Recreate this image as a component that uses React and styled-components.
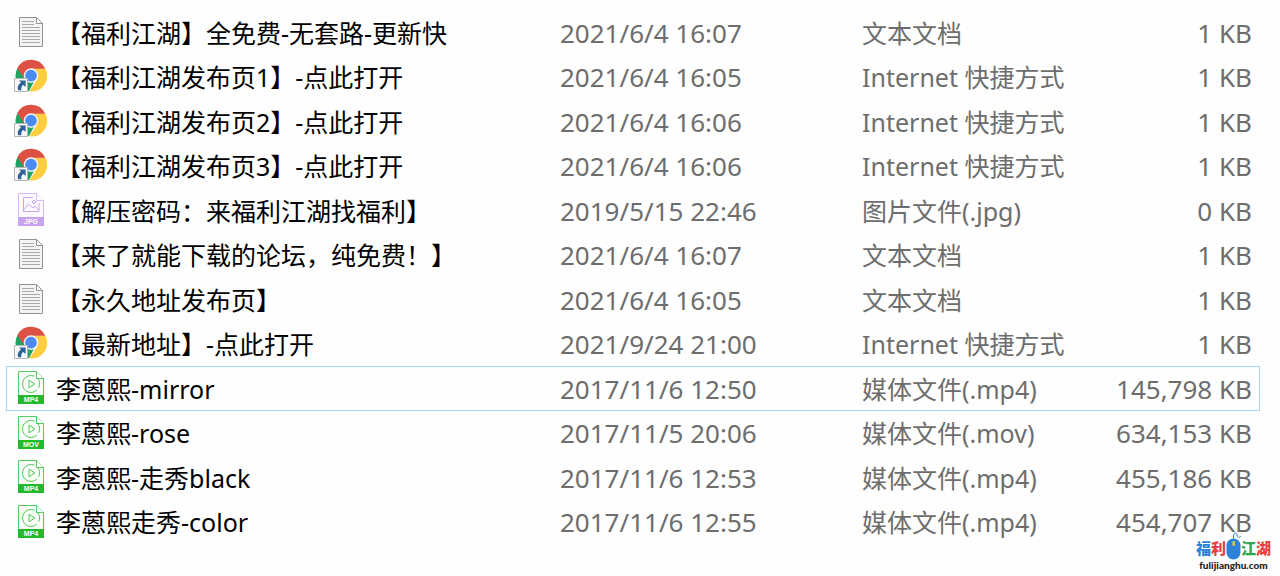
import React from 'react';
import styled, {createGlobalStyle} from 'styled-components';

const GlobalStyle = createGlobalStyle`
  body {
    margin: 0;
    background-color: #fefefe;
    font-family: 'Noto Sans', 'Noto Sans CJK SC', sans-serif;
  }
`

const Page = styled.main`
  position: relative;
  box-sizing: border-box;
  min-height: 100vh;
  padding: 10px 20px 0 6px;
`

const FileTable = styled.table`
  width: 100%;
  table-layout: fixed;
  border-collapse: collapse;
  font-size: 25px;
  line-height: 36px;
  color: #6d6d6d;
`

const Column = styled.col`
  width: ${props => props.$width};
`

const Row = styled.tr`
  height: 45px;
  outline: ${props => props.$selected ? '1px solid #a5d4f5' : 'none'};
  outline-offset: -1px;
  &:nth-child(even) {
    height: 44px;
  }
`

const Cell = styled.td`
  padding: 0;
  white-space: nowrap;
`

const NumberCell = styled(Cell)`
  font-size: 26px;
  padding-right: ${props => props.$right ? '8px' : '0'};
  text-align: ${props => props.$right ? 'right' : 'left'};
`

const NameCell = styled.th`
  padding: 0;
  text-align: left;
  font-weight: 400;
  white-space: nowrap;
  color: #000;
`

const FileName = styled.div`
  display: flex;
  align-items: center;
  gap: 1px;
`

const IconBox = styled.span`
  display: flex;
  justify-content: center;
  width: 49px;
  padding-bottom: 2px;
  svg {
    display: block;
  }
`

const Watermark = styled.a`
  position: absolute;
  right: 9px;
  bottom: 6px;
  display: flex;
  flex-direction: column;
  align-items: center;
  text-decoration: none;
  color: #222;
`

const Brand = styled.span`
  display: flex;
  align-items: flex-end;
  height: 29px;
  font: 900 15px/16px 'Noto Sans CJK SC', sans-serif;
`

const BrandChar = styled.span`
  padding-bottom: 4px;
  color: ${props => props.$color};
`

const Domain = styled.span`
  font: 900 10px/10px 'Lato', sans-serif;
`

const TextIcon = () => (
  <svg width='26' height='32' viewBox='0 0 26 32' aria-hidden='true'>
    <path d='M1.5 1.5h17l6 6v23h-23z' fill='#f4f4f4' stroke='#929292' />
    <path d='M18.5 1.5v6h6z' fill='#fff' stroke='#929292' />
    <path
      d='M4 5.5h12M4 8.5h12M4 11.5h18M4 14.5h18M4 17.5h18M4 20.5h18M4 23.5h18M4 26.5h18'
      stroke='#a9a9a9'
    />
  </svg>
)

const ChromeIcon = () => (
  <svg width='33' height='34' viewBox='0 0 33 34' aria-hidden='true'>
    <path d='M17 17L3.6 9A15.5 15.5 0 0 0 15 32.2L22 19z' fill='#1da462' />
    <path d='M17 17V9.5h14.2A15.5 15.5 0 0 1 15.5 32.3L23.5 20z' fill='#ffcd40' />
    <path d='M3.3 9.2A15.5 15.5 0 0 1 31.2 9.8H17L10.5 20z' fill='#dd5144' />
    <circle cx='17' cy='16.6' r='7.3' fill='#f1f1f1' />
    <circle cx='17' cy='16.6' r='5.8' fill='#4b8bf5' />
    <path d='M.5 19.5h13v13H.5z' fill='#f8f8f8' stroke='#b5b5b5' />
    <path d='M5 21.4h6.6V28l-2.2-2c-1.8 1-2.4 2.6-2 5.3H4.2c-1.2-3.4 0-6 2.8-7.9z' fill='#2e6299' />
  </svg>
)

const LabelIcon = ({color, paper, label, children}) => (
  <svg width='28' height='35' viewBox='0 0 28 35' aria-hidden='true'>
    <path d='M1.5 1.5h18l7 7v25h-25z' fill={paper} stroke={color} strokeOpacity='.75' />
    <path d='M19.5 1.5v7h7' fill='#fff' stroke={color} strokeOpacity='.75' />
    {children}
    <path d='M1 25h26v9H1z' fill={color} />
    <text
      x='14'
      y='32'
      textAnchor='middle'
      fill='#fff'
      fontFamily='Liberation Sans, sans-serif'
      fontWeight='700'
      fontSize='7'
    >
      {label}
    </text>
  </svg>
)

const ImageIcon = () => (
  <LabelIcon color='#c9a2f0' paper='#fdfaff' label='JPG'>
    <path d='M16 5.5H6.5v14h15.5V11' fill='none' stroke='#c9a2f0' />
    <path d='M6.5 18l5-6 4.5 4 2-1.8 4 4' fill='none' stroke='#c9a2f0' />
    <circle cx='17' cy='10' r='1.5' fill='none' stroke='#c9a2f0' />
  </LabelIcon>
)

const VideoIcon = ({label}) => (
  <LabelIcon color='#22b92c' paper='#f9fef9' label={label}>
    <path
      d='M17.4 6.2A8.5 8.5 0 1 0 19.8 20.2M20.2 8.1A8.5 8.5 0 0 1 21.6 17.8'
      fill='none'
      stroke='#4fc657'
    />
    <path d='M12 10.2v7.6l5.8-3.8z' fill='none' stroke='#4fc657' strokeLinejoin='round' />
  </LabelIcon>
)

const MouseIcon = () => (
  <svg width='15' height='28' viewBox='0 0 15 28' aria-hidden='true'>
    <path d='M7.5 8V4C7.5 0 11 0 11 3s3 3 3.6 1' fill='none' stroke='#2c7fd0' />
    <rect x='.5' y='6.5' width='14' height='21' rx='7' fill='#2c82d8' />
    <rect x='6.5' y='9' width='2.4' height='5' rx='1' fill='#f4cd3c' />
  </svg>
)

const icons = {
  txt: <TextIcon />,
  url: <ChromeIcon />,
  jpg: <ImageIcon />,
  mp4: <VideoIcon label='MP4' />,
  mov: <VideoIcon label='MOV' />
}

const types = {
  txt: '文本文档',
  url: 'Internet 快捷方式',
  jpg: '图片文件(.jpg)',
  mp4: '媒体文件(.mp4)',
  mov: '媒体文件(.mov)'
}

const files = [
  {name: '【福利江湖】全免费-无套路-更新快', date: '2021/6/4 16:07', kind: 'txt', size: '1 KB'},
  {name: '【福利江湖发布页1】-点此打开', date: '2021/6/4 16:05', kind: 'url', size: '1 KB'},
  {name: '【福利江湖发布页2】-点此打开', date: '2021/6/4 16:06', kind: 'url', size: '1 KB'},
  {name: '【福利江湖发布页3】-点此打开', date: '2021/6/4 16:06', kind: 'url', size: '1 KB'},
  {name: '【解压密码：来福利江湖找福利】', date: '2019/5/15 22:46', kind: 'jpg', size: '0 KB'},
  {name: '【来了就能下载的论坛，纯免费！】', date: '2021/6/4 16:07', kind: 'txt', size: '1 KB'},
  {name: '【永久地址发布页】', date: '2021/6/4 16:05', kind: 'txt', size: '1 KB'},
  {name: '【最新地址】-点此打开', date: '2021/9/24 21:00', kind: 'url', size: '1 KB'},
  {name: '李蒽熙-mirror', date: '2017/11/6 12:50', kind: 'mp4', size: '145,798 KB', selected: true},
  {name: '李蒽熙-rose', date: '2017/11/5 20:06', kind: 'mov', size: '634,153 KB'},
  {name: '李蒽熙-走秀black', date: '2017/11/6 12:53', kind: 'mp4', size: '455,186 KB'},
  {name: '李蒽熙走秀-color', date: '2017/11/6 12:55', kind: 'mp4', size: '454,707 KB'}
]

export default function App () {
  return (
    <Page lang='zh-CN'>
      <GlobalStyle />
      <FileTable>
        <colgroup>
          <Column $width='auto' />
          <Column $width='302px' />
          <Column $width='226px' />
          <Column $width='172px' />
        </colgroup>
        <tbody>
          {files.map(file => (
            <Row key={file.name} $selected={file.selected}>
              <NameCell scope='row'>
                <FileName>
                  <IconBox>{icons[file.kind]}</IconBox>
                  {file.name}
                </FileName>
              </NameCell>
              <NumberCell>{file.date}</NumberCell>
              <Cell>{types[file.kind]}</Cell>
              <NumberCell $right>{file.size}</NumberCell>
            </Row>
          ))}
        </tbody>
      </FileTable>
      <Watermark href='#'>
        <Brand>
          <BrandChar $color='#2c82d8'>福</BrandChar>
          <BrandChar $color='#e8403c'>利</BrandChar>
          <MouseIcon />
          <BrandChar $color='#2fa84f'>江</BrandChar>
          <BrandChar $color='#e8403c'>湖</BrandChar>
        </Brand>
        <Domain>fulijianghu.com</Domain>
      </Watermark>
    </Page>
  )
}
